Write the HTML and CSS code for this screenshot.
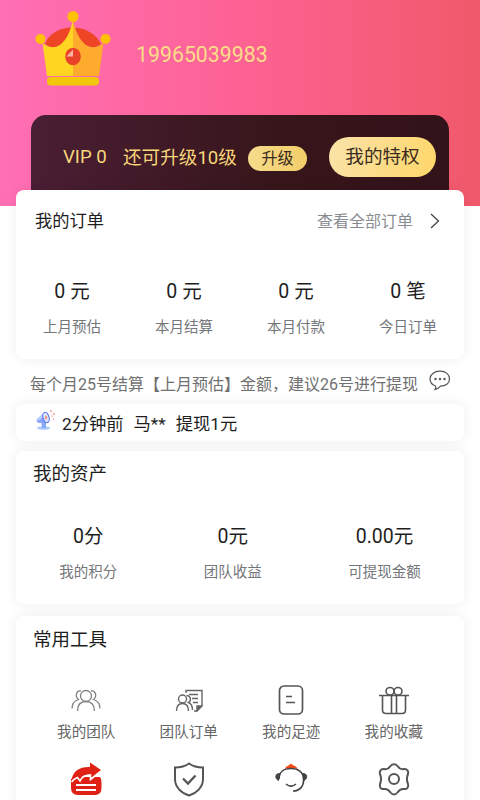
FILE: index.html
```html
<!DOCTYPE html>
<html lang="zh-CN">
<head>
<meta charset="utf-8">
<title>我的</title>
<link rel="stylesheet" href="styles.css">
</head>
<body>
<header class="hero">
  <div class="profile">
    <svg class="crown" width="76" height="78" viewBox="0 0 76 78">
      <path d="M10 34C18 12 56 12 66 34C58 41 50 37 38 24C28 38 19 41 10 34Z" fill="#ee4527"/>
      <path d="M7.500 33C22 44 33 32 38 10V66H12Z" fill="#ffd522"/>
      <path d="M38 10C43 32 54 44 68.500 33L64 66H38Z" fill="#ffab2d"/>
      <circle cx="38" cy="6.500" r="5.500" fill="#ffc105"/>
      <circle cx="5.500" cy="29" r="5" fill="#ffc105"/>
      <circle cx="70.500" cy="29" r="5" fill="#ffc105"/>
      <rect x="12" y="67" width="52" height="8.500" rx="4" fill="#f2c80c"/>
      <ellipse cx="38" cy="46.500" rx="7.800" ry="8.800" fill="#e94228"/>
      <path d="M31.500 46.500L38 39.500V46.500Z" fill="#f9b3a3"/>
    </svg>
    <span class="phone">19965039983</span>
  </div>
  <div class="vip">
    <span class="level">VIP 0</span>
    <span class="remain">还可升级10级</span>
    <span class="upgrade">升级</span>
    <span class="rights">我的特权</span>
  </div>
</header>
<main>
  <section class="card orders">
    <div class="orders-head">
      <h2>我的订单</h2>
      <span class="all">查看全部订单</span>
      <svg width="10" height="16" viewBox="0 0 10 16" fill="none" stroke="#444" stroke-width="1.300"><path d="M1 1L8.500 8L1 15"/></svg>
    </div>
    <div class="order-stats">
      <div class="stat"><b>0 元</b><span>上月预估</span></div>
      <div class="stat"><b>0 元</b><span>本月结算</span></div>
      <div class="stat"><b>0 元</b><span>本月付款</span></div>
      <div class="stat"><b>0 笔</b><span>今日订单</span></div>
    </div>
  </section>
  <div class="notice">
    <span>每个月25号结算【上月预估】金额，建议26号进行提现</span>
    <svg width="22" height="21" viewBox="0 0 22 21" fill="none" stroke="#555" stroke-width="1.200">
      <path d="M6.500 16C2.500 14.500 1 12 1 9C1 4.500 5 1.200 11 1.200S20.500 4.500 20.500 9S16.500 16.200 11.500 16.200C10 18 8 19 6 19.400C7 18.300 7 17 6.500 16Z"/>
      <g fill="#555" stroke="none"><circle cx="6.500" cy="9" r="1.200"/><circle cx="11" cy="9" r="1.200"/><circle cx="15.500" cy="9" r="1.200"/></g>
    </svg>
  </div>
  <section class="card ticker">
    <svg width="20" height="22" viewBox="0 0 20 22">
      <ellipse cx="7.500" cy="19" rx="6.500" ry="1.700" fill="#a9c8fb"/>
      <path d="M5 12L10 13V19H6Z" fill="#88a8f5"/>
      <path d="M1 10L8 4L12 13L4 14C1 14 0 12 1 10Z" fill="#86a5fa"/>
      <path d="M1 10L8 4L9.500 7L2 12Z" fill="#b9cbff"/>
      <ellipse cx="10" cy="8.500" rx="3" ry="5.300" transform="rotate(-18 10 8.500)" fill="#dce5ff" stroke="#5b70ea" stroke-width="1.100"/>
      <ellipse cx="10" cy="8.500" rx="1.200" ry="2" fill="#f39a82"/>
      <g fill="#ee9187"><circle cx="15" cy="2" r=".9"/><circle cx="18" cy="5" r=".9"/><circle cx="16" cy="7" r=".7"/><circle cx="17.500" cy="10" r=".8"/></g>
    </svg>
    <span class="ago">2分钟前</span><span class="who">马**</span><span>提现1元</span>
  </section>
  <section class="card assets">
    <h2>我的资产</h2>
    <div class="asset-stats">
      <div class="stat"><b>0分</b><span>我的积分</span></div>
      <div class="stat"><b>0元</b><span>团队收益</span></div>
      <div class="stat"><b>0.00元</b><span>可提现金额</span></div>
    </div>
  </section>
  <section class="card tools">
    <h2>常用工具</h2>
    <div class="tool-grid">
      <div class="tool">
        <svg width="32" height="32" viewBox="0 0 32 32" fill="none" stroke="#808080" stroke-width="1.300">
          <circle cx="16" cy="12" r="5.500"/><path d="M7.500 27C7.500 20.500 11 17.500 16 17.500S24.500 20.500 24.500 27M11 7C6.500 6 4.500 12.500 8.500 15.500C4 17 2 20 2 24.500M21 7C25.500 6 27.500 12.500 23.500 15.500C28 17 30 20 30 24.500"/>
        </svg>
        <span>我的团队</span>
      </div>
      <div class="tool">
        <svg width="32" height="32" viewBox="0 0 32 32" fill="none" stroke="#666" stroke-width="1.400">
          <path d="M13 9V6.500H29V22L24 27H21M16 10.500H25M19 14.500H25M20 18.500H25"/><path d="M24 26.500V22H28.500Z" fill="#555"/>
          <circle cx="9.500" cy="15" r="4"/><path d="M3.500 27C3.500 22 5.500 19.500 9.500 19.500S15.500 22 15.500 27M13.500 11.500C18 11.500 18.500 17 15.500 18.500C18 19.500 19.500 22 19.500 26"/>
        </svg>
        <span>团队订单</span>
      </div>
      <div class="tool">
        <svg width="32" height="32" viewBox="0 0 32 32" fill="none" stroke="#555" stroke-width="1.700">
          <rect x="4.500" y="2" width="23" height="28" rx="4.500"/><path d="M11 12.500H17M11 18.500H20"/>
        </svg>
        <span>我的足迹</span>
      </div>
      <div class="tool">
        <svg width="32" height="32" viewBox="0 0 32 32" fill="none" stroke="#555" stroke-width="1.600">
          <path d="M1 11.500H31M4.500 11.500V26Q4.500 29.500 8 29.500H24Q27.500 29.500 27.500 26V11.500M13.500 11V29M18.500 11V29"/><ellipse cx="12" cy="7.300" rx="4" ry="3.800"/><ellipse cx="20" cy="7.300" rx="4" ry="3.800"/>
        </svg>
        <span>我的收藏</span>
      </div>
      <div class="tool">
        <svg width="36" height="36" viewBox="0 0 36 36">
          <path d="M3 18L6 16H32Q33.500 18 33.500 21V27Q33.500 34 27 34H10Q3 34 3 27Z" fill="#df2215"/>
          <path d="M3.500 20.500C4 10 12 5.500 22 6V1.500L33 9L23 17.500V13.500C17 13.500 13 15 11.500 18.500L9.500 16C7 17 5 18.500 3.500 20.500Z" fill="#df2215"/>
          <path d="M3.500 21C5 19 7 17.500 9.500 16.500L12 20C14 15.500 17 14 22.500 14V18.500L32 11" fill="none" stroke="#fff" stroke-width="1.600"/>
          <path d="M8 24H28M8 29H28" stroke="#fff" stroke-width="1.800"/>
        </svg>
      </div>
      <div class="tool">
        <svg width="36" height="36" viewBox="0 0 36 36" fill="none" stroke="#555" stroke-width="2">
          <path d="M18 2.500C22 5.500 27 6.500 32 6.500V18C32 26 26 32 18 34.500C10 32 4 26 4 18V6.500C9 6.500 14 5.500 18 2.500Z"/><path d="M12 17.500L17 22.500L24.500 14.500" stroke-width="2.300"/>
        </svg>
      </div>
      <div class="tool">
        <svg width="36" height="36" viewBox="0 0 36 36" fill="none" stroke="#444" stroke-width="1.600">
          <path d="M12 8C12.500 5 16 5 18 2.500C20 5 24 5 24.500 8C20 6.500 16 6.500 12 8Z" fill="#f04a16" stroke="none"/>
          <path d="M6 18C6 11 11 7.500 18 7.500S30.500 11 30.500 18C31 25 27 30 20 30M13 23C16 25.500 20 25.500 23 23"/>
          <path d="M7 12.500C2 12 1.500 17.500 5.500 19.500ZM29.500 12.500C34.500 12 35 17.500 31 19.500Z" fill="#444" stroke-width="1"/>
        </svg>
      </div>
      <div class="tool">
        <svg width="36" height="36" viewBox="0 0 36 36" fill="none" stroke="#555" stroke-width="2">
          <path d="M14.500 5C16.500 2.500 19.500 2.500 21.500 5C23.500 8 25.500 8.500 28 8C31 7.500 33 10.500 32 13C30.500 16.500 30.500 19.500 32 23C33 26 31 28.500 28 28C25.500 27.500 23.500 28.500 21.500 31.500C19.500 34 16.500 34 14.500 31.500C12.500 28.500 10.500 27.500 8 28C5 28.500 3 26 4 23C5.500 19.500 5.500 16.500 4 13C3 10.500 5 7.500 8 8C10.500 8.500 12.500 8 14.500 5Z"/><circle cx="18" cy="18" r="5"/>
        </svg>
      </div>
    </div>
  </section>
</main>
</body>
</html>
```
FILE: styles.css
```css
* { box-sizing: border-box; }
body {
  margin: 0;
  height: 800px;
  overflow: hidden;
  background: #fff;
  color: #1e1e1e;
  font-family: Roboto, "Noto Sans CJK SC", sans-serif;
}
svg { display: block; flex: none; }
h2 { margin: 0; font-weight: 400; }
.hero {
  height: 206px;
  background: linear-gradient(90deg, #ff6fb5 0%, #fd6294 50%, #f0596a 100%);
}
.profile {
  height: 115px;
  padding: 10px 0 0 35px;
  display: flex;
  align-items: flex-start;
}
.phone {
  margin-left: 25px;
  line-height: 30px;
  padding-top: 30px;
  font-size: 21.300px;
  color: #fbdc87;
}
.vip {
  margin: 0 31px;
  height: 91px;
  padding: 0 13px 8px 32px;
  display: flex;
  align-items: center;
  border-radius: 15px 15px 0 0;
  background: linear-gradient(90deg, #4a1e34, #36161a 60%, #33131a);
  color: #f8d67a;
  font-size: 18.600px;
  white-space: nowrap;
}
.level { width: 60px; }
.remain { width: 125px; padding-bottom: 2px; }
.upgrade, .rights { color: #3a2b20; text-align: center; }
.upgrade {
  margin-top: 3px;
  width: 59px;
  line-height: 25px;
  border-radius: 13px;
  font-size: 16px;
  background: linear-gradient(90deg, #f5db8b, #f3cd69);
}
.rights {
  margin-left: auto;
  width: 107px;
  line-height: 40px;
  border-radius: 20px;
  font-size: 18.600px;
  background: linear-gradient(110deg, #fae3ab, #ffd668);
}
.card {
  margin: 0 16px;
  border-radius: 8px;
  background: #fff;
  box-shadow: 0 0 14px rgba(0, 0, 0, .07);
}
.orders {
  position: relative;
  margin-top: -16px;
  height: 169px;
}
.orders-head {
  height: 60px;
  padding: 0 24px 0 19px;
  display: flex;
  align-items: center;
}
.orders-head h2 { padding-bottom: 2px; font-size: 17.300px; }
.orders-head svg { margin-top: 2px; }
.all { margin-left: auto; margin-right: 17px; font-size: 16px; color: #888c92; }
.order-stats { display: grid; grid-template-columns: repeat(4, 1fr); padding-top: 27px; }
.stat { text-align: center; }
.stat b { display: block; font-weight: 400; font-size: 19.500px; line-height: 30px; }
.stat span { display: block; margin-top: 11px; font-size: 14.500px; line-height: 20px; color: #73767a; }
.notice {
  height: 45px;
  padding: 2px 29px 0 30px;
  display: flex;
  align-items: center;
  justify-content: space-between;
  font-size: 16px;
  white-space: nowrap;
  color: #707070;
}
.notice svg { margin-bottom: 4px; }
.ticker {
  height: 37px;
  padding: 0 0 1px 20px;
  display: flex;
  align-items: center;
  font-size: 17.300px;
}
.ticker svg { margin: -4px 6px 0 0; }
.ago { margin-right: 10px; }
.who { margin-right: 10px; }
.assets { margin-top: 10px; height: 153px; }
.assets h2, .tools h2 { padding-left: 17px; font-size: 18.500px; line-height: 46px; }
.asset-stats { display: flex; justify-content: space-around; padding-top: 25px; }
.tools { margin-top: 12px; height: 220px; }
.tools h2 { padding-top: 1px; }
.tool-grid {
  display: grid;
  grid-template-columns: repeat(4, 1fr);
  grid-template-rows: 77px 36px;
  padding: 21px 19px 0;
}
.tool { display: flex; flex-direction: column; align-items: center; }
.tool span { margin-top: 6px; font-size: 14.600px; line-height: 20px; color: #666; }
```
